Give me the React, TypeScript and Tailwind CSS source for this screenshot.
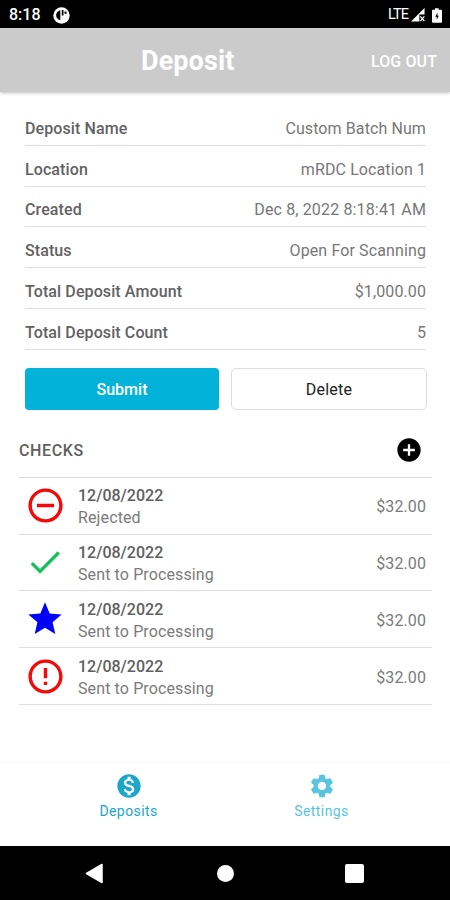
import type { ReactNode } from "react";
import {
  MdAddCircle,
  MdCheck,
  MdErrorOutline,
  MdMonetizationOn,
  MdRemoveCircleOutline,
  MdSettings,
  MdStar,
} from "react-icons/md";

const details: [string, string, string][] = [
  ["Deposit Name", "Custom Batch Num", "tracking-[0.1px]"],
  ["Location", "mRDC Location 1", "tracking-[0.1px]"],
  ["Created", "Dec 8, 2022 8:18:41 AM", "tracking-[0.15px]"],
  ["Status", "Open For Scanning", "tracking-[0.12px]"],
  ["Total Deposit Amount", "$1,000.00", "tracking-[0.1px]"],
  ["Total Deposit Count", "5", ""],
];

const checks: { icon: ReactNode; status: string }[] = [
  { icon: <MdRemoveCircleOutline className="size-[41px] text-[#f60808]" />, status: "Rejected" },
  { icon: <MdCheck className="size-[40px] text-[#14c15c]" />, status: "Sent to Processing" },
  { icon: <MdStar className="size-[40px] text-[#0000fb]" />, status: "Sent to Processing" },
  { icon: <MdErrorOutline className="size-[41px] text-[#f60808]" />, status: "Sent to Processing" },
];

function StatusBar() {
  return (
    <div className="flex h-7 items-center justify-between bg-black pt-[2px] pr-2 pl-[9px] text-white">
      <div className="flex items-center gap-3">
        <span className="text-[16px] leading-none font-medium">8:18</span>
        <svg width="17" height="17" viewBox="0 0 17 17">
          <circle cx="8.5" cy="8.5" r="8.2" fill="#fff" />
          <path d="M7.3 3.2v10C4.600 12.500 3 10.500 3.100 8 3.200 5.700 4.800 3.900 7.300 3.200Z" fill="#000" />
          <path d="M8.800 3h1.700v5.500H8.800zM11.500 4.500h2v2.300h-2z" fill="#000" />
        </svg>
      </div>
      <div className="flex items-center">
        <span className="mr-[3px] text-[14.5px] leading-none tracking-[-0.9px]">LTE</span>
        <svg width="14" height="14" viewBox="0 0 15 15">
          <path d="M14.500 0v7H9v7.500H0Z" fill="#fff" />
          <path d="m10 9 4.300 5M14.300 9 10 14" stroke="#fff" strokeWidth="1.400" />
        </svg>
        <svg className="ml-[7px]" width="10" height="15" viewBox="0 0 11 16">
          <path d="M3.300 0h4v1.700H10a1 1 0 0 1 1 1V15a1 1 0 0 1-1 1H1a1 1 0 0 1-1-1V2.700a1 1 0 0 1 1-1h2.300Z" fill="#fff" />
          <path d="M6 5 3.500 9.500h1.700v3L7.500 8.300H6Z" fill="#000" />
        </svg>
      </div>
    </div>
  );
}

export default function App() {
  return (
    <div className="flex h-[900px] w-[450px] flex-col overflow-hidden bg-white font-[Roboto,sans-serif] text-[16px]">
      <StatusBar />
      <header className="flex h-16 shrink-0 items-center justify-between bg-[#cbcbcb] pt-[3px] pr-[13px] pl-[141px] text-white shadow-[0_1px_3px_rgba(0,0,0,0.25)]">
        <h1 className="text-[27px] leading-none font-bold tracking-[0.1px]">Deposit</h1>
        <span className="leading-none font-medium tracking-[0.1px]">LOG OUT</span>
      </header>

      <dl className="mt-[13px] ml-[25px] w-[401px]">
        {details.map(([name, value, tracking]) => (
          <div key={name} className="flex h-[40.8px] items-center justify-between border-b border-[#dedede] pt-2">
            <dt className="font-medium tracking-[0.1px] text-[#626262]">{name}</dt>
            <dd className={`text-[#777] ${tracking}`}>{value}</dd>
          </div>
        ))}
      </dl>

      <div className="mt-[18px] ml-[25px] flex w-[402px] gap-3">
        <button className="h-[42px] flex-1 rounded-[4px] bg-[#02b2d9] pt-[2px] font-medium text-white">Submit</button>
        <button className="h-[42px] flex-1 rounded-[5px] border border-[#dedede] pt-[2px] tracking-[0.2px] text-[#222]">Delete</button>
      </div>

      <div className="ml-[19px] flex h-[68px] w-[413px] items-center justify-between border-b border-[#d9d9d9] pt-[14px] pr-[9px]">
        <h2 className="pt-px font-medium tracking-[0.6px] text-[#606060]">CHECKS</h2>
        <MdAddCircle className="size-7 text-black" />
      </div>
      <ul className="ml-[19px] w-[413px]">
        {checks.map((check, i) => (
          <li key={i} className="flex h-[56.8px] items-center border-b border-[#dedede] pr-[6px] pl-[6px]">
            <span className="flex w-[53px] shrink-0">{check.icon}</span>
            <div className="flex-1 pt-[3px] leading-[22px]">
              <div className="font-medium text-[#606060]">12/08/2022</div>
              <div className="tracking-[0.12px] text-[#7b7b7b]">{check.status}</div>
            </div>
            <span className="pt-[3px] tracking-[0.1px] text-[#7b7b7b]">$32.00</span>
          </li>
        ))}
      </ul>

      <nav className="mt-auto flex h-[84px] shrink-0 items-start justify-between border-t border-[#f7f7f7] px-8 pt-[9px] text-[14px]">
        <div className="flex w-[193px] flex-col items-center text-[#1ba6cc]">
          <MdMonetizationOn className="size-7" />
          <span className="mt-px leading-5 tracking-[0.4px]">Deposits</span>
        </div>
        <div className="flex w-[193px] flex-col items-center text-[#59c4df]">
          <MdSettings className="size-7" />
          <span className="mt-px leading-5 tracking-[0.4px]">Settings</span>
        </div>
      </nav>
      <footer className="flex h-[54px] shrink-0 items-center bg-black text-white">
        <svg className="ml-[85px]" width="19" height="21" viewBox="0 0 19 21">
          <path d="M1.500 10.500 17 1.500v18Z" fill="#fff" stroke="#fff" strokeWidth="1.500" strokeLinejoin="round" />
        </svg>
        <span className="ml-[113px] size-[17px] rounded-full bg-white" />
        <span className="ml-[111px] size-[19px] rounded-[2px] bg-white" />
      </footer>
    </div>
  );
}
